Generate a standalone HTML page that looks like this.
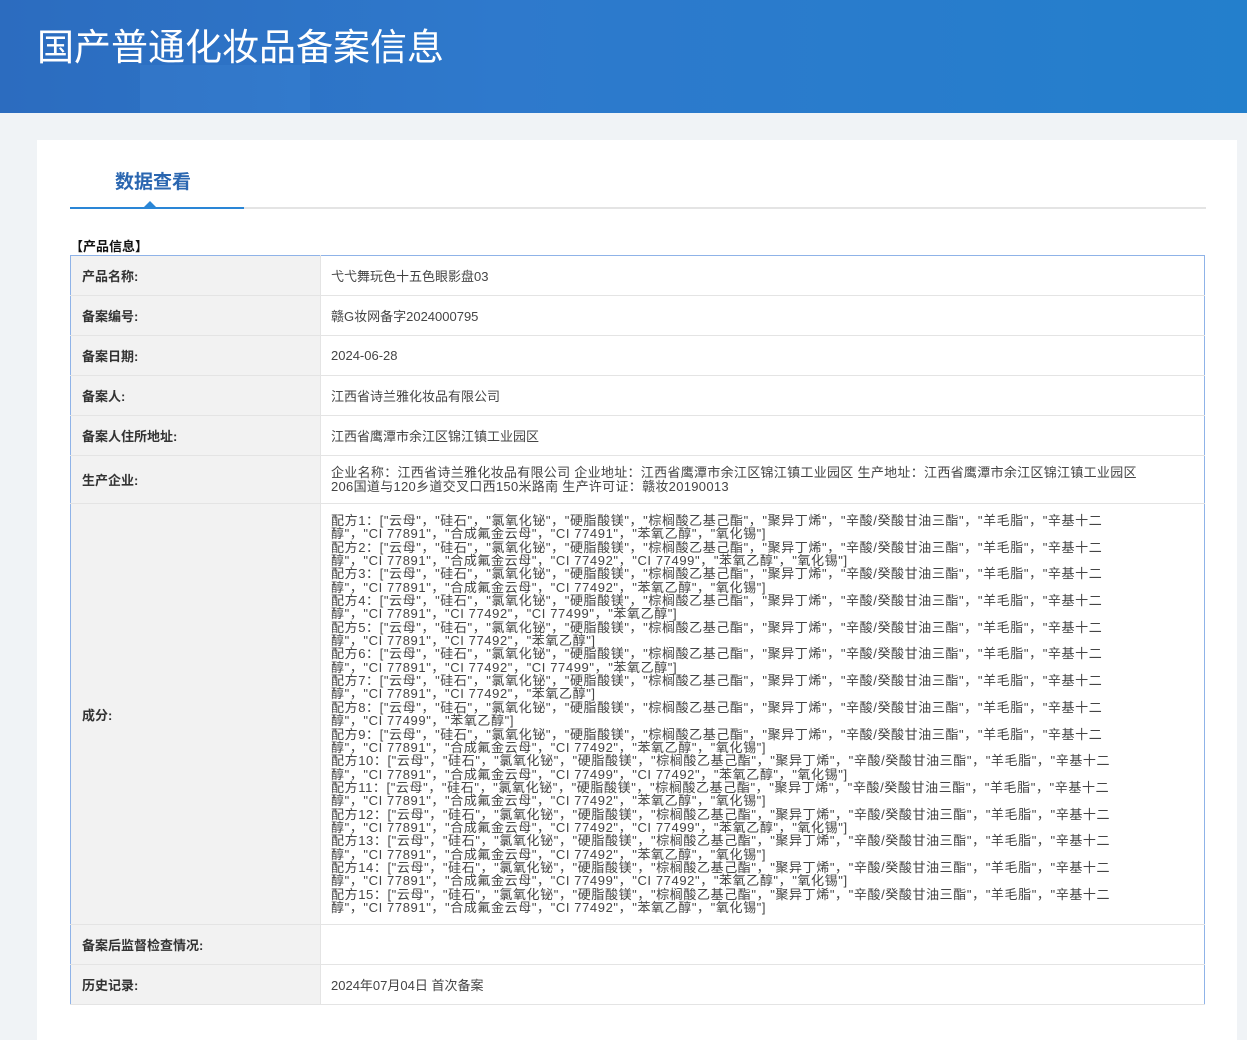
<!DOCTYPE html>
<html><head><meta charset="utf-8">
<style>
*{margin:0;padding:0;box-sizing:border-box}
body{width:1247px;height:996px;overflow:hidden;background:#f0f3f6;font-family:"Liberation Sans","Noto Sans CJK SC",sans-serif;color:#333}
.hdr{position:absolute;left:0;top:0;width:1247px;height:113px;background:linear-gradient(90deg,#2c6cbf 0%,#2e79cc 40%,#237fcc 100%);overflow:hidden}
.hdr .b1{position:absolute;left:140px;top:65px;width:170px;height:50px;background:rgba(80,150,230,.18)}
.hdr h1{position:absolute;left:37px;top:17px;font-size:37px;font-weight:normal;color:#fff;font-family:"Liberation Sans","Noto Sans CJK SC",sans-serif}
.card{position:absolute;left:37px;top:140px;width:1200px;height:900px;background:#fff}
.tab{position:absolute;left:78px;top:27px;font-size:19px;font-weight:bold;color:#2a66b0}
.line{position:absolute;left:33px;top:67px;width:1136px;height:2px;background:#e4e4e4}
.line2{position:absolute;left:33px;top:67px;width:174px;height:2px;background:#2a86d6}
.tri{position:absolute;left:107px;top:61px;width:0;height:0;border-left:6px solid transparent;border-right:6px solid transparent;border-bottom:6px solid #2a86d6}
.sec{position:absolute;left:33px;top:96px;font-size:13px;font-weight:bold;color:#111}
table{position:absolute;left:33px;top:115px;width:1135px;border-collapse:collapse;border:1px solid #8fb3e8}
td{border-bottom:1px solid #e4e4e4;font-size:13px;vertical-align:middle}
td.l{width:250px;background:#f2f2f2;font-weight:bold;padding-left:11px;color:#333;border-right:1px solid #e4e4e4}
td.v{padding-left:10px;color:#444}
.ing{line-height:13.35px;white-space:nowrap;padding:10px 0 10px 10px;letter-spacing:0.6px}
</style></head><body>
<div class="hdr"><div class="b1"></div><h1>国产普通化妆品备案信息</h1></div>
<div class="card">
<div class="tab">数据查看</div>
<div class="line"></div><div class="line2"></div><div class="tri"></div>
<div class="sec">【产品信息】</div>
<table>
<tr style="height:40px"><td class="l">产品名称:</td><td class="v">弋弋舞玩色十五色眼影盘03</td></tr>
<tr style="height:40px"><td class="l">备案编号:</td><td class="v">赣G妆网备字2024000795</td></tr>
<tr style="height:40px"><td class="l">备案日期:</td><td class="v">2024-06-28</td></tr>
<tr style="height:40px"><td class="l">备案人:</td><td class="v">江西省诗兰雅化妆品有限公司</td></tr>
<tr style="height:40px"><td class="l">备案人住所地址:</td><td class="v">江西省鹰潭市余江区锦江镇工业园区</td></tr>
<tr style="height:48px"><td class="l">生产企业:</td><td class="v" style="line-height:13.5px;letter-spacing:0.3px">企业名称：江西省诗兰雅化妆品有限公司 企业地址：江西省鹰潭市余江区锦江镇工业园区 生产地址：江西省鹰潭市余江区锦江镇工业园区<br>206国道与120乡道交叉口西150米路南 生产许可证：赣妆20190013</td></tr>
<tr style="height:421px"><td class="l">成分:</td><td class="v ing">
配方1：["云母"，"硅石"，"氯氧化铋"，"硬脂酸镁"，"棕榈酸乙基己酯"，"聚异丁烯"，"辛酸/癸酸甘油三酯"，"羊毛脂"，"辛基十二<br>醇"，"CI 77891"，"合成氟金云母"，"CI 77491"，"苯氧乙醇"，"氧化锡"]<br>
配方2：["云母"，"硅石"，"氯氧化铋"，"硬脂酸镁"，"棕榈酸乙基己酯"，"聚异丁烯"，"辛酸/癸酸甘油三酯"，"羊毛脂"，"辛基十二<br>醇"，"CI 77891"，"合成氟金云母"，"CI 77492"，"CI 77499"，"苯氧乙醇"，"氧化锡"]<br>
配方3：["云母"，"硅石"，"氯氧化铋"，"硬脂酸镁"，"棕榈酸乙基己酯"，"聚异丁烯"，"辛酸/癸酸甘油三酯"，"羊毛脂"，"辛基十二<br>醇"，"CI 77891"，"合成氟金云母"，"CI 77492"，"苯氧乙醇"，"氧化锡"]<br>
配方4：["云母"，"硅石"，"氯氧化铋"，"硬脂酸镁"，"棕榈酸乙基己酯"，"聚异丁烯"，"辛酸/癸酸甘油三酯"，"羊毛脂"，"辛基十二<br>醇"，"CI 77891"，"CI 77492"，"CI 77499"，"苯氧乙醇"]<br>
配方5：["云母"，"硅石"，"氯氧化铋"，"硬脂酸镁"，"棕榈酸乙基己酯"，"聚异丁烯"，"辛酸/癸酸甘油三酯"，"羊毛脂"，"辛基十二<br>醇"，"CI 77891"，"CI 77492"，"苯氧乙醇"]<br>
配方6：["云母"，"硅石"，"氯氧化铋"，"硬脂酸镁"，"棕榈酸乙基己酯"，"聚异丁烯"，"辛酸/癸酸甘油三酯"，"羊毛脂"，"辛基十二<br>醇"，"CI 77891"，"CI 77492"，"CI 77499"，"苯氧乙醇"]<br>
配方7：["云母"，"硅石"，"氯氧化铋"，"硬脂酸镁"，"棕榈酸乙基己酯"，"聚异丁烯"，"辛酸/癸酸甘油三酯"，"羊毛脂"，"辛基十二<br>醇"，"CI 77891"，"CI 77492"，"苯氧乙醇"]<br>
配方8：["云母"，"硅石"，"氯氧化铋"，"硬脂酸镁"，"棕榈酸乙基己酯"，"聚异丁烯"，"辛酸/癸酸甘油三酯"，"羊毛脂"，"辛基十二<br>醇"，"CI 77499"，"苯氧乙醇"]<br>
配方9：["云母"，"硅石"，"氯氧化铋"，"硬脂酸镁"，"棕榈酸乙基己酯"，"聚异丁烯"，"辛酸/癸酸甘油三酯"，"羊毛脂"，"辛基十二<br>醇"，"CI 77891"，"合成氟金云母"，"CI 77492"，"苯氧乙醇"，"氧化锡"]<br>
配方10：["云母"，"硅石"，"氯氧化铋"，"硬脂酸镁"，"棕榈酸乙基己酯"，"聚异丁烯"，"辛酸/癸酸甘油三酯"，"羊毛脂"，"辛基十二<br>醇"，"CI 77891"，"合成氟金云母"，"CI 77499"，"CI 77492"，"苯氧乙醇"，"氧化锡"]<br>
配方11：["云母"，"硅石"，"氯氧化铋"，"硬脂酸镁"，"棕榈酸乙基己酯"，"聚异丁烯"，"辛酸/癸酸甘油三酯"，"羊毛脂"，"辛基十二<br>醇"，"CI 77891"，"合成氟金云母"，"CI 77492"，"苯氧乙醇"，"氧化锡"]<br>
配方12：["云母"，"硅石"，"氯氧化铋"，"硬脂酸镁"，"棕榈酸乙基己酯"，"聚异丁烯"，"辛酸/癸酸甘油三酯"，"羊毛脂"，"辛基十二<br>醇"，"CI 77891"，"合成氟金云母"，"CI 77492"，"CI 77499"，"苯氧乙醇"，"氧化锡"]<br>
配方13：["云母"，"硅石"，"氯氧化铋"，"硬脂酸镁"，"棕榈酸乙基己酯"，"聚异丁烯"，"辛酸/癸酸甘油三酯"，"羊毛脂"，"辛基十二<br>醇"，"CI 77891"，"合成氟金云母"，"CI 77492"，"苯氧乙醇"，"氧化锡"]<br>
配方14：["云母"，"硅石"，"氯氧化铋"，"硬脂酸镁"，"棕榈酸乙基己酯"，"聚异丁烯"，"辛酸/癸酸甘油三酯"，"羊毛脂"，"辛基十二<br>醇"，"CI 77891"，"合成氟金云母"，"CI 77499"，"CI 77492"，"苯氧乙醇"，"氧化锡"]<br>
配方15：["云母"，"硅石"，"氯氧化铋"，"硬脂酸镁"，"棕榈酸乙基己酯"，"聚异丁烯"，"辛酸/癸酸甘油三酯"，"羊毛脂"，"辛基十二<br>醇"，"CI 77891"，"合成氟金云母"，"CI 77492"，"苯氧乙醇"，"氧化锡"]
</td></tr>
<tr style="height:40px"><td class="l">备案后监督检查情况:</td><td class="v"></td></tr>
<tr style="height:40px"><td class="l">历史记录:</td><td class="v">2024年07月04日 首次备案</td></tr>
</table>
</div>
</body></html>
